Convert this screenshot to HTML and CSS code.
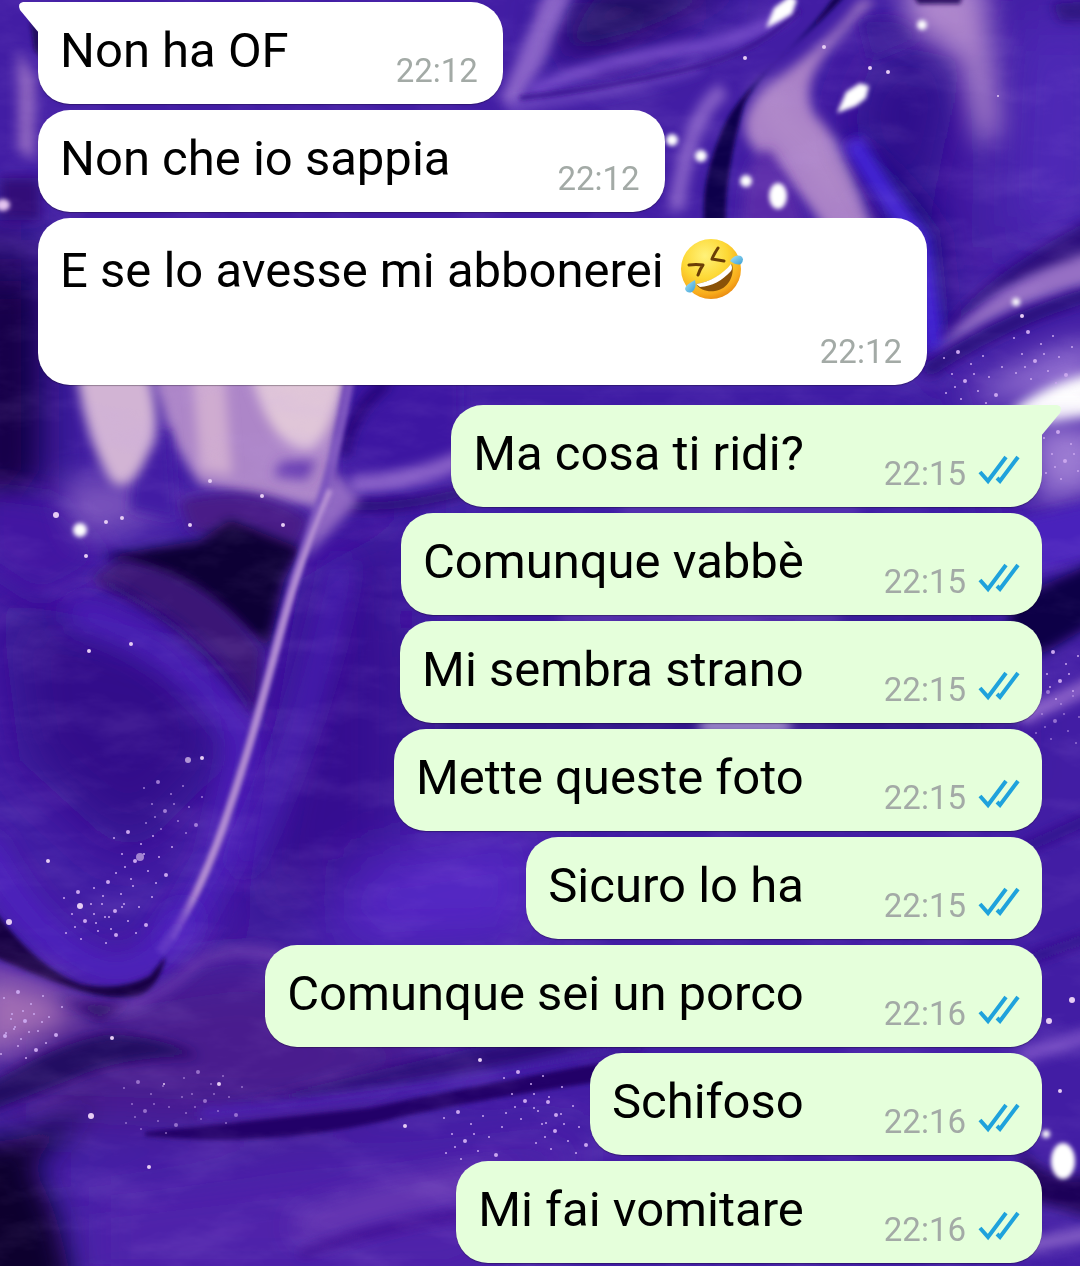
FILE: index.html
```html
<!DOCTYPE html>
<html lang="it">
<head>
    <meta charset="UTF-8">
    <meta name="viewport" content="width=device-width, initial-scale=1.0">
    <title>Chat</title>
    <link rel="stylesheet" href="styles.css">
</head>
<body>
    <!-- Sfondo della chat -->
    <svg class="wallpaper" viewBox="0 0 1080 1266" preserveAspectRatio="xMidYMin slice" aria-hidden="true">
        <defs>
            <filter id="b2" filterUnits="userSpaceOnUse" x="-40" y="-40" width="1160" height="1346"><feGaussianBlur stdDeviation="2"/></filter>
            <filter id="b6" filterUnits="userSpaceOnUse" x="-40" y="-40" width="1160" height="1346"><feGaussianBlur stdDeviation="6"/></filter>
            <filter id="b14" filterUnits="userSpaceOnUse" x="-60" y="-60" width="1200" height="1386"><feGaussianBlur stdDeviation="14"/></filter>
            <filter id="b28" filterUnits="userSpaceOnUse" x="-100" y="-100" width="1280" height="1466"><feGaussianBlur stdDeviation="28"/></filter>
            <filter id="grain" x="0" y="0" width="100%" height="100%">
                <feTurbulence type="fractalNoise" baseFrequency="0.012 0.03" numOctaves="5" seed="7"/>
                <feColorMatrix values="0 0 0 0 .55  0 0 0 0 .36  0 0 0 0 .85  2.6 0 0 0 -1.15"/>
            </filter>
            <g id="glitter" fill="#c9a6ee">
                <circle cx="4" cy="8" r="1"/><circle cx="18" cy="2" r="2"/><circle cx="31" cy="14" r="1"/>
                <circle cx="12" cy="24" r="1"/><circle cx="25" cy="31" r="2"/><circle cx="43" cy="6" r="1"/>
                <circle cx="49" cy="27" r="1"/><circle cx="38" cy="41" r="1"/><circle cx="6" cy="43" r="1"/>
                <circle cx="21" cy="49" r="1"/><circle cx="56" cy="45" r="2"/><circle cx="62" cy="17" r="1"/>
                <circle cx="34" cy="24" r="1"/><circle cx="15" cy="37" r="1"/><circle cx="46" cy="53" r="1"/>
            </g>
        </defs>
        <rect width="1080" height="1266" fill="#421da4"/>

        <!-- zone ampie di luce e ombra -->
        <g filter="url(#b28)">
            <path d="M-40 240H40V500H-40z" fill="#14034f"/>
            <path d="M0 600L200 640 230 760 130 860 20 760z" fill="#32118a"/>
            <path d="M300 580L400 520 400 860 240 940z" fill="#341090"/>
            <path d="M360 860L540 830 530 940 330 950z" fill="#5426c4"/>
            <path d="M420 640L1000 620 1000 760 420 800z" fill="#32128a"/>
            <path d="M0 1000L260 960 480 1060 300 1130 0 1120z" fill="#4a1c8e"/>
            <path d="M80 1190L600 1130 480 1290 80 1290z" fill="#4f24aa"/>
            <path d="M420 380L940 380 1000 600 420 600z" fill="#3c1aa4"/>
            <path d="M560 0H720L640 40 570 60z" fill="#24086a"/>
            <path d="M880 40L960 60 930 220 990 290 900 240 850 120z" fill="#2f108a"/>
            <path d="M1020 20H1100V220L1010 250z" fill="#5029b8"/>
        </g>

        <!-- angolo in alto a sinistra -->
        <path d="M18 50L36 80 34 160 18 150z" fill="#8b62bd" filter="url(#b6)"/>
        <path d="M30 20L42 30V60L34 50z" fill="#23095f" filter="url(#b2)"/>
        <path d="M0 178H40V220H0z" fill="#331078" filter="url(#b6)"/>
        <path d="M-20 290H30V470L10 500H-20z" fill="#12034a" filter="url(#b14)"/>
        <path d="M-20 490L60 500 110 560 40 600-20 560z" fill="#4219a2" filter="url(#b14)"/>
        <ellipse cx="3" cy="205" rx="7" ry="6" fill="#e6c6f0" filter="url(#b2)"/>

        <!-- pieghe in alto a destra -->
        <path d="M546-10L500 100 515 110 545 60 575-10z" fill="#8a64c8" filter="url(#b6)"/>
        <path d="M600-10L560 50 640 30 740-10z" fill="#220764" filter="url(#b14)"/>
        <path d="M530 92Q600 60 690 48 750 40 790 10" stroke="#7a50cc" stroke-width="12" fill="none" filter="url(#b6)"/>
        <path d="M510 108Q620 92 700 66" stroke="#6e46c0" stroke-width="10" fill="none" filter="url(#b6)"/>
        <path d="M520 98Q620 86 700 66 760 50 800 10" stroke="#3a1690" stroke-width="4" fill="none" filter="url(#b2)"/>
        <path d="M724 90Q690 110 676 210" stroke="#8660c6" stroke-width="16" fill="none" filter="url(#b6)"/>
        <path d="M860 0C820 60 740 90 745 130C750 160 800 180 826 232L876 232C856 190 850 150 815 116C796 80 826 50 876 0z" fill="#a980c6" filter="url(#b6)"/>
        <path d="M780 85Q765 105 780 122 820 150 840 200" stroke="#b48ecb" stroke-width="20" fill="none" filter="url(#b14)"/>
        <path d="M770 150Q740 150 742 240H806Q800 190 770 150z" fill="#5a2ca8" filter="url(#b6)"/>
        <path d="M836-6C800 50 742 82 722 130C708 165 702 190 704 225H726C724 190 734 140 744 104C762 66 812 34 846-6z" fill="#11034c" filter="url(#b2)"/>
        <path d="M860 20Q910 10 920 40L870 60z" fill="#361294" filter="url(#b6)"/>
        <path d="M900-20L984-20 1000 130 980 150 960 60 910 30z" fill="#ac84ca" filter="url(#b14)"/>
        <path d="M910-10H965L960 4H918z" fill="#2a0b60" filter="url(#b2)"/>
        <path d="M1052 4L1100 0V20H1060z" fill="#280a78" filter="url(#b6)"/>
        <path d="M842 128Q890 160 940 230L950 330 920 330 880 200z" fill="#1b0a7c" filter="url(#b14)"/>
        <path d="M852 140Q880 190 920 240L935 350" stroke="#4322d4" stroke-width="20" fill="none" filter="url(#b6)"/>
        <path d="M935 345Q970 280 1100 215V270Q1000 270 935 345z" fill="#29097a" filter="url(#b6)"/>
        <path d="M935 355Q985 280 1100 250L1100 284Q1010 300 935 355z" fill="#9670c4" filter="url(#b6)"/>
        <path d="M925 372Q1020 310 1110 290" stroke="#250a78" stroke-width="14" fill="none" filter="url(#b6)"/>
        <path d="M960 400Q1040 340 1100 340V400z" fill="#8a68cc" filter="url(#b14)"/>
        <path d="M1010 412Q1050 380 1100 372V415L1050 424z" fill="#ffffff" filter="url(#b6)"/>
        <path d="M1030 425H1100V490L1040 500z" fill="#9b7ad2" filter="url(#b14)"/>

        <!-- macchie chiare e ombra centrale -->
        <path d="M60 480Q130 470 180 510L80 540z" fill="#7952bc" filter="url(#b14)"/>
        <path d="M150 370H345L330 510 200 485 172 440z" fill="#ad86c8" filter="url(#b6)"/>
        <path d="M136 440L170 430 176 520 130 510z" fill="#421ba4" filter="url(#b6)"/>
        <path d="M76 370H148Q164 430 150 450 130 500 110 480 86 440 76 370z" fill="#d2b4d4" filter="url(#b6)"/>
        <path d="M250 370H346Q330 440 310 450 270 450 250 370z" fill="#e0c6d8" filter="url(#b6)"/>
        <path d="M192 370L224 370 232 475 200 470z" fill="#cfacd0" filter="url(#b6)"/>
        <path d="M280 462L316 460 306 480 274 476z" fill="#6438b0" filter="url(#b6)"/>
        <path d="M180 500Q260 480 310 520L290 560 190 530z" fill="#4a1f88" filter="url(#b6)"/>
        <path d="M104 556L200 540 230 520 300 548 284 580 268 648 200 596z" fill="#0b0134" filter="url(#b6)"/>
        <path d="M120 558Q210 575 262 650L256 720Q200 620 90 580z" fill="#3a1276" filter="url(#b6)"/>
        <path d="M100 580Q200 630 250 710" stroke="#250868" stroke-width="8" fill="none" filter="url(#b6)"/>
        <path d="M70 610Q180 640 246 740L220 860 170 950" stroke="#4f24c0" stroke-width="26" fill="none" filter="url(#b14)"/>
        <path d="M352 370L338 470Q350 510 400 498L460 488V370z" fill="#3d16a2" filter="url(#b6)"/>
        <path d="M350 484Q410 484 470 456" stroke="#8a62c8" stroke-width="18" fill="none" filter="url(#b6)"/>
        <path d="M388 382Q350 410 344 456" stroke="#220670" stroke-width="10" fill="none" filter="url(#b6)"/>
        <path d="M345 505Q400 510 470 490" stroke="#260970" stroke-width="10" fill="none" filter="url(#b6)"/>

        <!-- piega lunga a sinistra -->
        <path d="M335 470L312 520 304 560 360 500z" fill="#9068c2" filter="url(#b6)"/>
        <path d="M342 560Q320 700 240 870" stroke="#4d22bc" stroke-width="18" fill="none" filter="url(#b14)"/>
        <path d="M350 380Q334 470 304 550C280 620 266 700 232 800C214 860 190 910 160 952" stroke="#7d55be" stroke-width="9" fill="none" filter="url(#b2)"/>
        <path d="M330 490Q300 560 284 620C262 700 250 750 222 830 208 868 190 910 172 938" stroke="#bd98d6" stroke-width="5" fill="none" filter="url(#b2)"/>
        <path d="M-20 840Q30 940 100 970 130 980 160 952L190 910" stroke="#4f24c2" stroke-width="28" fill="none" filter="url(#b14)"/>
        <path d="M-20 890Q30 965 80 984 120 992 150 976L166 956Q158 988 140 996 110 1002 70 988 20 970-20 950z" fill="#160443" filter="url(#b2)"/>
        <path d="M-20 966Q60 996 110 1010 150 1006 200 962 250 940 290 962" stroke="#6a3aac" stroke-width="8" fill="none" filter="url(#b6)"/>

        <!-- onde in basso -->
        <path d="M-20 970L50 990 80 1020-20 1060z" fill="#a06cb4" filter="url(#b14)"/>
        <path d="M54 994Q90 1010 130 1002L100 1018z" fill="#27095e" filter="url(#b6)"/>
        <path d="M-20 1090Q60 1040 110 1034 160 1036 200 1056 120 1056 70 1080L-20 1115z" fill="#240862" filter="url(#b6)"/>
        <path d="M-40 1140Q50 1150 96 1090 64 1140 30 1166 60 1200 76 1310H-40z" fill="#08012e" filter="url(#b14)"/>
        <path d="M220 1110Q370 1070 640 1010V1050Q400 1092 240 1104z" fill="#2a0a78" filter="url(#b6)"/>
        <path d="M200 1114Q440 1094 640 1040" stroke="#4f25bc" stroke-width="8" fill="none" filter="url(#b6)"/>
        <path d="M145 1132Q260 1120 370 1108 480 1084 640 1056V1076Q480 1098 380 1122 260 1148 145 1136z" fill="#230668" filter="url(#b2)"/>
        <path d="M300 1230Q400 1190 500 1180" stroke="#7444b8" stroke-width="20" fill="none" filter="url(#b14)"/>
        <path d="M300 1254Q390 1222 500 1210" stroke="#351086" stroke-width="6" fill="none" filter="url(#b6)"/>

        <!-- bordo destro -->
        <path d="M1010 520L1100 500V556L1010 580z" fill="#4a24bc" filter="url(#b6)"/>
        <path d="M1010 600L1100 560V620L1040 655 1010 640z" fill="#100447" filter="url(#b6)"/>
        <path d="M1020 718L1110 676" stroke="#8a60c8" stroke-width="16" fill="none" filter="url(#b6)"/>
        <path d="M1020 850L1110 810M1026 960L1110 930" stroke="#2d0e88" stroke-width="10" fill="none" filter="url(#b6)"/>
        <path d="M1020 1056L1110 1030" stroke="#744cc2" stroke-width="16" fill="none" filter="url(#b6)"/>
        <path d="M1020 1150Q1060 1190 1100 1170V1220L1026 1200z" fill="#1b0658" filter="url(#b6)"/>
        <path d="M1020 1247L1110 1230" stroke="#8660c6" stroke-width="14" fill="none" filter="url(#b6)"/>
        <path d="M700 726H790" stroke="#eadcf6" stroke-width="8" filter="url(#b6)"/>
        <path d="M620 510H860M560 618H840" stroke="#8c68cc" stroke-width="4" filter="url(#b6)"/>

        <rect width="1080" height="1266" filter="url(#grain)" opacity=".1"/>

        <!-- riflessi -->
        <g fill="#fff" filter="url(#b2)">
            <path d="M766 28L774 8 790-4 797 0 792 14 778 22z"/>
            <path d="M837 113L846 92 860 83 869 86 866 98 856 106z"/>
            <ellipse cx="778" cy="196" rx="9" ry="13"/>
            <circle cx="672" cy="140" r="6"/>
            <circle cx="701" cy="156" r="6"/>
            <circle cx="746" cy="181" r="6"/>
            <circle cx="80" cy="530" r="7"/>
            <circle cx="922" cy="25" r="5"/>
            <circle cx="1016" cy="302" r="4"/>
            <ellipse cx="1063" cy="1161" rx="12" ry="18"/>
            <circle cx="1046" cy="1134" r="4"/>
        </g>
        <g fill="#e6cdf4">
            <circle cx="56" cy="515" r="3"/><circle cx="106" cy="522" r="2"/><circle cx="122" cy="518" r="2"/>
            <circle cx="190" cy="525" r="2"/><circle cx="283" cy="525" r="2"/><circle cx="210" cy="481" r="2"/>
            <circle cx="262" cy="496" r="2"/><circle cx="86" cy="556" r="2"/><circle cx="131" cy="644" r="2"/>
            <circle cx="89" cy="651" r="2"/><circle cx="9" cy="922" r="3"/><circle cx="48" cy="861" r="2"/>
            <circle cx="80" cy="906" r="3"/><circle cx="91" cy="1116" r="3"/><circle cx="112" cy="1038" r="2"/>
            <circle cx="149" cy="1167" r="2"/><circle cx="164" cy="1084" r="1"/><circle cx="219" cy="1084" r="2"/>
            <circle cx="480" cy="1060" r="2"/><circle cx="405" cy="1126" r="2"/><circle cx="870" cy="68" r="2"/>
            <circle cx="888" cy="72" r="2"/><circle cx="745" cy="58" r="2"/><circle cx="824" cy="47" r="2"/>
            <circle cx="1022" cy="316" r="2"/><circle cx="998" cy="96" r="1"/>
            <circle cx="1049" cy="1021" r="3"/><circle cx="1072" cy="1000" r="3"/><circle cx="1060" cy="1091" r="2"/>
            <circle cx="140" cy="857" r="4" opacity=".6"/><circle cx="188" cy="760" r="3" opacity=".7"/>
            <circle cx="202" cy="758" r="2"/>
        </g>
        <use href="#glitter" x="60" y="890"/>
        <use href="#glitter" x="90" y="880"/>
        <use href="#glitter" x="110" y="830"/>
        <use href="#glitter" x="140" y="780" opacity=".7"/>
        <use href="#glitter" x="0" y="990"/>
        <use href="#glitter" x="-20" y="1005"/>
        <use href="#glitter" x="120" y="1080" opacity=".6"/>
        <use href="#glitter" x="180" y="1070" opacity=".6"/>
        <use href="#glitter" x="440" y="1110"/>
        <use href="#glitter" x="500" y="1070"/>
        <use href="#glitter" x="530" y="1100"/>
        <use href="#glitter" x="940" y="350"/>
        <use href="#glitter" x="1010" y="330"/>
        <use href="#glitter" x="1040" y="430"/>
        <use href="#glitter" x="1035" y="650"/>
        <use href="#glitter" x="1030" y="690" opacity=".6"/>
    </svg>

    <svg class="symbols" aria-hidden="true">
        <symbol id="ticks" viewBox="0 0 42 30">
            <path d="M2 17L10 26 28 2M19 23L22 26 40 2" fill="none" stroke="#1fa2dc" stroke-width="4"/>
        </symbol>
    </svg>

    <ul class="chat">
        <li class="message received tail">
            <p>Non ha OF</p>
            <span class="meta"><time>22:12</time></span>
        </li>
        <li class="message received">
            <p>Non che io sappia</p>
            <span class="meta"><time>22:12</time></span>
        </li>
        <li class="message received">
            <p>E se lo avesse mi abbonerei <svg class="emoji" viewBox="0 0 64 62" role="img" aria-label="Faccina che si rotola dal ridere">
                <defs>
                    <radialGradient id="face" cx="40%" cy="28%" r="75%">
                        <stop offset="0" stop-color="#fff27a"/>
                        <stop offset=".5" stop-color="#fdd835"/>
                        <stop offset=".85" stop-color="#f8ab1c"/>
                        <stop offset="1" stop-color="#e98a12"/>
                    </radialGradient>
                    <linearGradient id="tear" x1="0" y1="0" x2="1" y2="1">
                        <stop offset="0" stop-color="#a8e4fa"/>
                        <stop offset="1" stop-color="#3a9fd4"/>
                    </linearGradient>
                </defs>
                <circle cx="31" cy="31" r="30" fill="url(#face)"/>
                <path d="M16 46C30 44 44 36 52 26C55 38 48 51 35 53 27 54 20 52 16 46z" fill="#8a5208"/>
                <path d="M16 46C30 44 43 36 51 26Q53 30 51 33C42 43 32 48 20 49z" fill="#fff"/>
                <path d="M9 27Q16 26 23 27 20 31 18 37M38 10Q34 16 32 21 38 22 44 23" fill="none" stroke="#6b3e06" stroke-width="3" stroke-linecap="round" stroke-linejoin="round"/>
                <path d="M15 42Q17 50 12 54 7 56 5 51 5 47 15 42z" fill="url(#tear)"/>
                <path d="M50 23Q55 16 61 18 65 21 61 26 57 28 50 23z" fill="url(#tear)"/>
            </svg></p>
            <span class="meta"><time>22:12</time></span>
        </li>
        <li class="message sent tail">
            <p>Ma cosa ti ridi?</p>
            <span class="meta"><time>22:15</time><svg class="ticks" role="img" aria-label="Letto"><use href="#ticks"/></svg></span>
        </li>
        <li class="message sent">
            <p>Comunque vabbè</p>
            <span class="meta"><time>22:15</time><svg class="ticks" role="img" aria-label="Letto"><use href="#ticks"/></svg></span>
        </li>
        <li class="message sent">
            <p>Mi sembra strano</p>
            <span class="meta"><time>22:15</time><svg class="ticks" role="img" aria-label="Letto"><use href="#ticks"/></svg></span>
        </li>
        <li class="message sent">
            <p>Mette queste foto</p>
            <span class="meta"><time>22:15</time><svg class="ticks" role="img" aria-label="Letto"><use href="#ticks"/></svg></span>
        </li>
        <li class="message sent">
            <p>Sicuro lo ha</p>
            <span class="meta"><time>22:15</time><svg class="ticks" role="img" aria-label="Letto"><use href="#ticks"/></svg></span>
        </li>
        <li class="message sent">
            <p>Comunque sei un porco</p>
            <span class="meta"><time>22:16</time><svg class="ticks" role="img" aria-label="Letto"><use href="#ticks"/></svg></span>
        </li>
        <li class="message sent">
            <p>Schifoso</p>
            <span class="meta"><time>22:16</time><svg class="ticks" role="img" aria-label="Letto"><use href="#ticks"/></svg></span>
        </li>
        <li class="message sent">
            <p>Mi fai vomitare</p>
            <span class="meta"><time>22:16</time><svg class="ticks" role="img" aria-label="Letto"><use href="#ticks"/></svg></span>
        </li>
    </ul>
</body>
</html>
```
FILE: styles.css
```css
* {
    box-sizing: border-box;
}

body {
    margin: 0;
    font-family: Roboto, 'Liberation Sans', sans-serif;
    color: #000;
    background: #421da4;
    overflow-x: hidden;
}

.wallpaper {
    position: fixed;
    top: 0;
    left: 0;
    width: 100%;
    height: 100%;
    z-index: -1;
}

.symbols {
    display: none;
}

.chat {
    display: flex;
    flex-direction: column;
    gap: 6px;
    margin: 0;
    padding: 2px 38px;
    list-style: none;
}

.message {
    position: relative;
    display: flex;
    flex-wrap: wrap;
    justify-content: flex-end;
    align-items: flex-end;
    row-gap: 3px;
    max-width: 889px;
    padding: 20px 25px 14px 22px;
    border-radius: 32px;
    box-shadow: 0 1px 1px rgba(0, 0, 0, 0.3);
}

.message p {
    align-self: flex-start;
    margin: 0 auto 0 0;
    font-size: 49px;
    line-height: 58px;
}

/* l'ora resta in basso, il testo un po' piu in alto */
.message .meta {
    display: flex;
    align-items: flex-start;
    gap: 12px;
    margin-top: 30px;
    font-size: 33px;
    line-height: 38px;
    color: #a3aaa6;
}

.received {
    align-self: flex-start;
    column-gap: 107px;
    background: #fff;
}

.sent {
    align-self: flex-end;
    column-gap: 80px;
    padding-right: 22px;
    background: #e5ffdb;
}

.received + .sent {
    margin-top: 14px;
}

.tail::before {
    content: "";
    position: absolute;
    top: 0;
    width: 20px;
    height: 31px;
}

.received.tail {
    border-top-left-radius: 0;
}

.received.tail::before {
    left: -19px;
    background: #fff;
    clip-path: path("M20 0H4Q-2 1 1 8L20 31z");
}

.sent.tail {
    border-top-right-radius: 0;
}

.sent.tail::before {
    right: -19px;
    background: #e5ffdb;
    clip-path: path("M0 0H16Q22 1 19 8L0 31z");
}

.emoji {
    width: 64px;
    height: 62px;
    margin-left: 4px;
    vertical-align: -13px;
}

.ticks {
    width: 42px;
    height: 30px;
}
```
